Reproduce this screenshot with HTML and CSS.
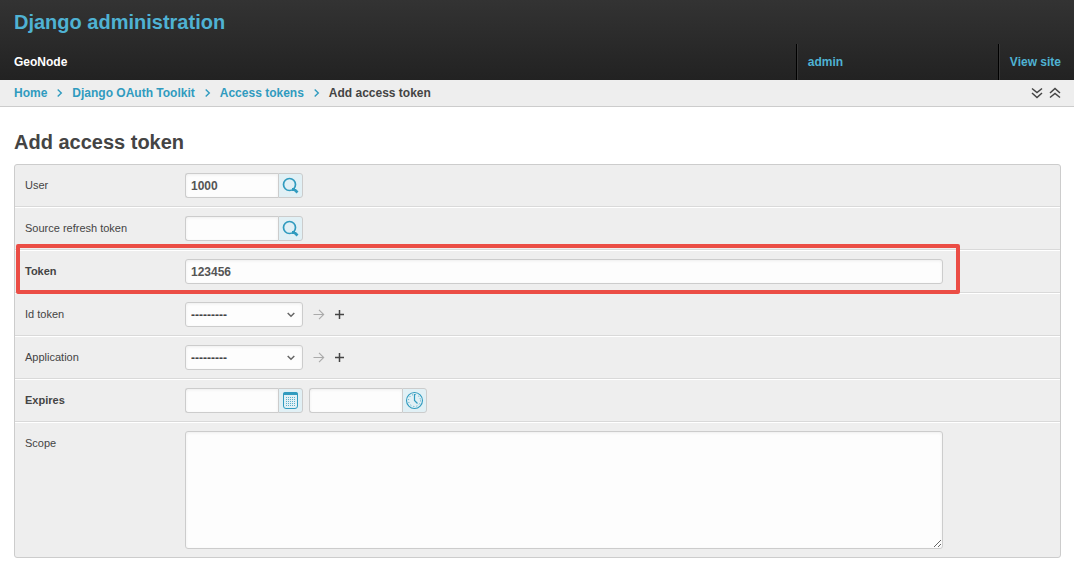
FILE: index.html
```
<!DOCTYPE html>
<html lang="en">
<head>
<meta charset="utf-8">
<title>Add access token | Django administration</title>
<link rel="stylesheet" href="styles.css">
</head>
<body>
<svg class="sprite" aria-hidden="true">
  <symbol id="chevron" viewBox="0 0 6 8"><path d="M.7 .5 4.3 4 .7 7.500" fill="none" stroke="currentColor" stroke-width="1.400"/></symbol>
  <symbol id="search" viewBox="0 0 18 18"><circle cx="7.500" cy="7.500" r="6" fill="none" stroke="currentColor" stroke-width="1.700"/><path d="M10 12.500h3M12 12l3.500 3.500" stroke="currentColor" stroke-width="2.800" fill="none"/></symbol>
  <symbol id="arrow" viewBox="0 0 12 12"><path d="M.5 5.500h10.500M6 .8l4.700 4.700L6 10.200" fill="none" stroke="currentColor" stroke-width="1.100"/></symbol>
  <symbol id="plus" viewBox="0 0 10 10"><path d="M0 4.500h9M4.500 0v9" fill="none" stroke="currentColor" stroke-width="1.500"/></symbol>
</svg>
<header class="header">
  <h1 class="site-name"><a href="#">Django administration</a></h1>
  <nav class="tools">
    <a class="brand" href="#">GeoNode</a>
    <a class="tool user" href="#">admin</a>
    <a class="tool" href="#">View site</a>
  </nav>
</header>
<div class="crumb-bar">
  <nav class="crumbs" aria-label="Breadcrumbs">
    <a href="#">Home</a><svg class="chevron"><use href="#chevron"/></svg>
    <a href="#">Django OAuth Toolkit</a><svg class="chevron"><use href="#chevron"/></svg>
    <a href="#">Access tokens</a><svg class="chevron"><use href="#chevron"/></svg>
    <span>Add access token</span>
  </nav>
  <div class="togglers">
    <button type="button" class="bare" aria-label="Expand all"><svg width="12" height="12" viewBox="0 0 12 12"><path d="M1 1.500l5 4 5-4M1 6l5 4.500L11 6" fill="none" stroke="currentColor" stroke-width="1.500"/></svg></button>
    <button type="button" class="bare" aria-label="Collapse all"><svg width="12" height="12" viewBox="0 0 12 12"><path d="M1 6l5-4.500L11 6M1 10.500l5-4 5 4" fill="none" stroke="currentColor" stroke-width="1.500"/></svg></button>
  </div>
</div>
<main class="content">
  <h2 class="title">Add access token</h2>
  <form class="module">
    <div class="row">
      <label class="label" for="user">User</label>
      <div class="group"><input class="field" id="user" type="text" value="1000"><button type="button" class="addon" aria-label="Look up user"><svg width="18" height="18"><use href="#search"/></svg></button></div>
    </div>
    <div class="row">
      <label class="label" for="source">Source refresh token</label>
      <div class="group"><input class="field" id="source" type="text"><button type="button" class="addon" aria-label="Look up source refresh token"><svg width="18" height="18"><use href="#search"/></svg></button></div>
    </div>
    <div class="row highlighted">
      <label class="label required" for="token">Token</label>
      <input class="field wide" id="token" type="text" value="123456">
    </div>
    <div class="row">
      <label class="label" for="idtoken">Id token</label>
      <div class="select-wrap"><select class="field select" id="idtoken"><option>---------</option></select><svg class="caret" viewBox="0 0 8 6"><path d="M.7 1 4 4.300 7.300 1" fill="none" stroke="currentColor" stroke-width="1.500"/></svg></div>
      <a class="related change" href="#" aria-label="Change id token"><svg width="12" height="12"><use href="#arrow"/></svg></a>
      <a class="related add" href="#" aria-label="Add id token"><svg width="10" height="10"><use href="#plus"/></svg></a>
    </div>
    <div class="row">
      <label class="label" for="application">Application</label>
      <div class="select-wrap"><select class="field select" id="application"><option>---------</option></select><svg class="caret" viewBox="0 0 8 6"><path d="M.7 1 4 4.300 7.300 1" fill="none" stroke="currentColor" stroke-width="1.500"/></svg></div>
      <a class="related change" href="#" aria-label="Change application"><svg width="12" height="12"><use href="#arrow"/></svg></a>
      <a class="related add" href="#" aria-label="Add application"><svg width="10" height="10"><use href="#plus"/></svg></a>
    </div>
    <div class="row">
      <label class="label required" for="expires-date">Expires</label>
      <div class="group"><input class="field" id="expires-date" type="text"><button type="button" class="addon" aria-label="Choose date"><svg width="17" height="19" viewBox="0 0 17 19"><rect x="1.500" y="1.500" width="14" height="16" rx="2.500" fill="none" stroke="currentColor"/><path d="M1 4V3q0-2 2-2h11q2 0 2 2v1z" fill="currentColor"/><path d="M4 6.500h10M4 8.500h10M4 10.500h10M4 12.500h10M4 14.500h10" stroke="currentColor" stroke-dasharray="1 1" opacity=".75"/></svg></button></div>
      <div class="group"><input class="field" id="expires-time" type="text" aria-label="Expires time"><button type="button" class="addon" aria-label="Choose time"><svg width="19" height="19" viewBox="0 0 19 19"><circle cx="9.500" cy="9.500" r="8" fill="none" stroke="currentColor" stroke-width="1.100"/><circle cx="9.500" cy="9.500" r="6" fill="none" stroke="currentColor" stroke-dasharray=".9 2.240"/><path d="M9.500 3v6.500l3 3" fill="none" stroke="currentColor" stroke-width="1.200"/></svg></button></div>
    </div>
    <div class="row">
      <label class="label" for="scope">Scope</label>
      <textarea class="field wide area" id="scope"></textarea>
    </div>
  </form>
</main>
</body>
</html>
```
FILE: styles.css
```
*, *::after { box-sizing: border-box; }
body {
  margin: 0;
  background: #fff;
  color: #444;
  font: 12px/16px "Liberation Sans", Arial, sans-serif;
}
a { color: #309bbf; text-decoration: none; }
.sprite { display: none; }
svg { display: block; }

.header { background: linear-gradient(#333, #222); }
.site-name {
  margin: 0;
  padding: 0 14px;
  font-size: 20px;
  line-height: 44px;
}
.site-name a, .tool { color: #4fb2d3; }
.tools {
  display: flex;
  height: 36px;
  padding: 0 13px 0 14px;
  line-height: 36px;
  font-weight: bold;
}
.brand { flex: 1; color: #fff; }
.tool {
  padding-left: 11px;
  border-left: 1px solid #000;
  box-shadow: inset 1px 0 #383838;
}
.user { width: 202px; }

.crumb-bar {
  display: flex;
  justify-content: space-between;
  align-items: center;
  height: 27px;
  padding: 0 13px 0 14px;
  background: #eee;
  border-bottom: 1px solid #ccc;
  font-weight: bold;
}
.crumbs { display: flex; align-items: center; }
.chevron { width: 6px; height: 8px; margin: 0 9px 0 10px; color: #309bbf; }
.togglers { display: flex; gap: 6px; }
.bare { padding: 0; border: 0; background: none; color: #444; }

.content { padding: 24px 13px 7px 14px; }
.title { margin: 0 0 11px; font-size: 20px; line-height: 22px; }
.module {
  background: #eee;
  border: 1px solid #ccc;
  border-radius: 3px;
}
.row {
  position: relative;
  display: flex;
  align-items: flex-start;
  padding: 8px 10px;
  border-top: 1px solid #fff;
  border-bottom: 1px solid #d9d9d9;
}
.row:first-child { border-top: 0; }
.row:last-child { border-bottom: 0; }
.highlighted::after {
  content: "";
  position: absolute;
  z-index: 1;
  inset: -7px auto -2px 1px;
  width: 944px;
  border: 4px solid #eb4d45;
  border-radius: 2px;
  pointer-events: none;
}
.label { width: 160px; flex: none; font-size: 11px; line-height: 24px; }
.required { font-weight: bold; }

.field {
  display: block;
  width: 94px;
  height: 25px;
  margin: 0;
  padding: 0 5px;
  border: 1px solid #ccc;
  border-radius: 3px;
  background: #fdfdfd;
  box-shadow: inset 0 1px 3px #eee;
  color: #555;
  font: bold 12px "Liberation Sans", Arial, sans-serif;
  outline: 0;
}
.wide { width: 758px; }
.area { height: 118px; padding: 5px; resize: both; }
.group { display: flex; margin-right: 6px; }
.group .field { border-right: 0; border-radius: 3px 0 0 3px; width: 93px; }
.addon {
  display: flex;
  align-items: center;
  justify-content: center;
  width: 25px;
  height: 25px;
  padding: 0;
  border: 1px solid #ccc;
  border-radius: 0 3px 3px 0;
  background: #e1f0f5;
  color: #309bbf;
}
.select-wrap { position: relative; }
.select { width: 118px; appearance: none; color: #444; }
.caret {
  position: absolute;
  top: 10px;
  right: 8px;
  width: 8px;
  height: 6px;
  color: #666;
  pointer-events: none;
}
.related { display: flex; align-items: center; height: 25px; margin-left: 10px; }
.change { color: #aaa; }
.add { color: #444; }
```
